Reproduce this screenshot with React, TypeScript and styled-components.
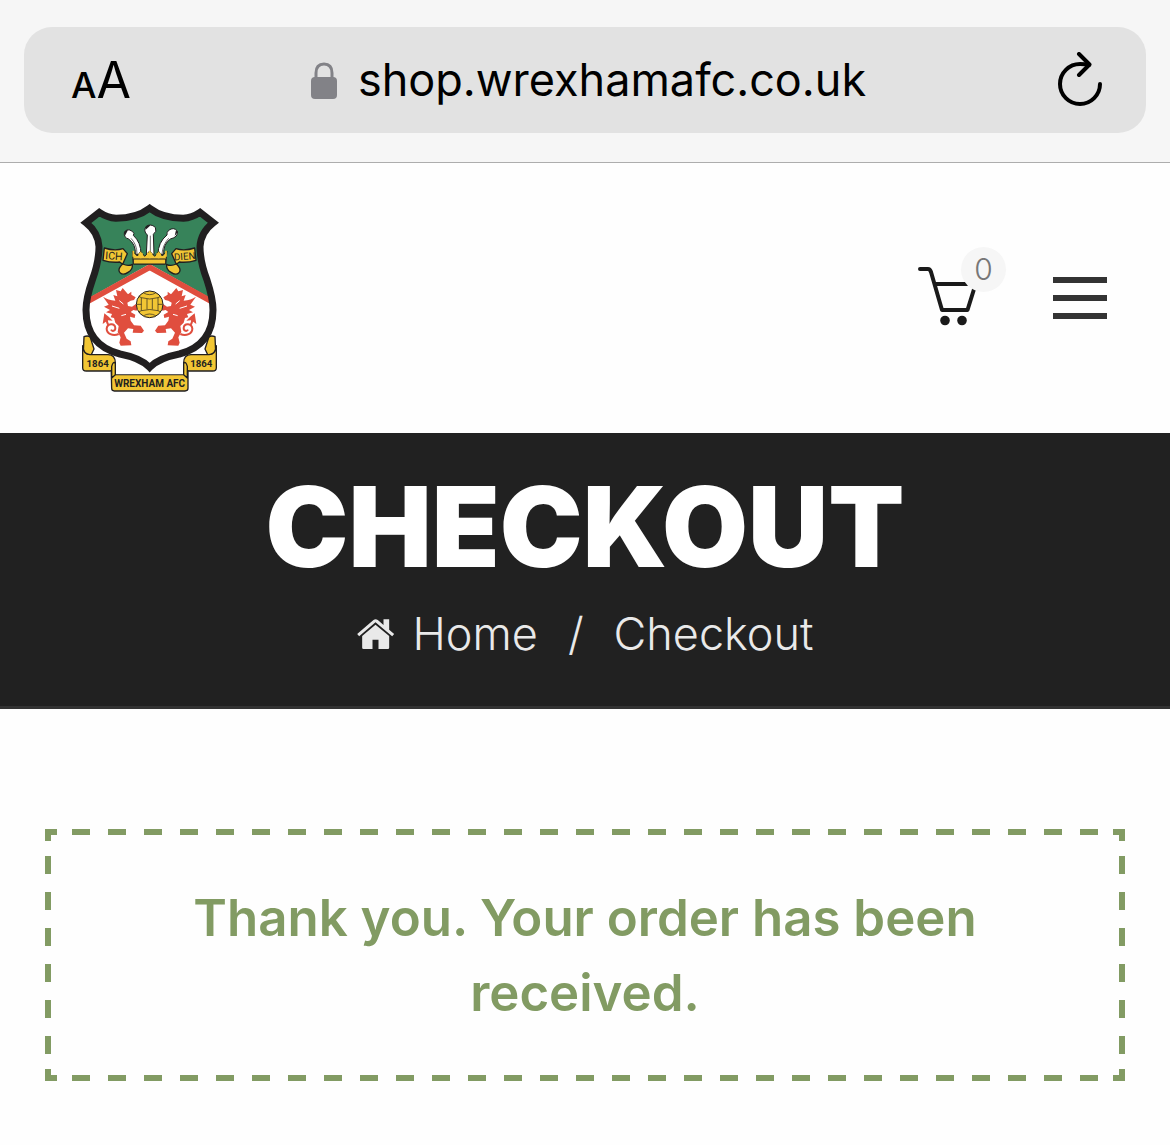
import React from "react";
import styled, { createGlobalStyle } from "styled-components";

const colors = {
  ink: "#212121",
  line: "#333333",
  green: "#829b63",
};

const GlobalStyle = createGlobalStyle`
  *, *::before, *::after { box-sizing: border-box; }
  body {
    margin: 0;
    background: #fefefe;
    font-family: Inter, "Liberation Sans", sans-serif;
  }
`;

const BrowserBar = styled.div`
  padding: 27px 24px 29px;
  background: #f6f6f6;
  border-bottom: 1px solid #adadad;
`;

const AddressField = styled.div`
  display: grid;
  grid-template-columns: 1fr auto 1fr;
  align-items: center;
  min-height: 106px;
  padding: 0 44px 0 47px;
  border-radius: 28px;
  background: #e2e2e2;
`;

const PlainButton = styled.button`
  display: flex;
  align-items: center;
  padding: 0;
  border: 0;
  background: none;
  color: #000;
  font: inherit;
  cursor: pointer;
`;

const TextSizeButton = styled(PlainButton)`
  justify-self: start;
  align-items: baseline;
  padding-top: 5px;
  font-size: 50px;
  line-height: 60px;
`;

const SmallLetter = styled.span`
  font-size: 36px;
  font-weight: 500;
`;

const UrlButton = styled(PlainButton)`
  gap: 21px;
  padding-left: 4px;
  font-size: 45px;
  line-height: 60px;
`;

const ReloadButton = styled(PlainButton)`
  justify-self: end;
`;

const SiteHeader = styled.header`
  display: flex;
  align-items: center;
  justify-content: space-between;
  padding: 41px 63px 40px 80px;
`;

const LogoLink = styled.a`
  display: block;
  height: 189px;
`;

const HeaderActions = styled.nav`
  display: flex;
  align-items: center;
  gap: 74px;
  padding-bottom: 2px;
`;

const CartLink = styled.a`
  position: relative;
  display: block;
  height: 64px;
  color: #1a1a1a;
`;

const CartCount = styled.span`
  position: absolute;
  top: -19px;
  right: -27px;
  width: 45px;
  border-radius: 50%;
  background: #f6f6f6;
  color: #777;
  font-size: 30px;
  font-weight: 300;
  line-height: 45px;
  text-align: center;
`;

const MenuButton = styled(PlainButton)`
  flex-direction: column;
  gap: 12px;
`;

const MenuBar = styled.span`
  width: 54px;
  height: 6px;
  background: ${colors.line};
`;

const TitleBand = styled.section`
  display: flex;
  flex-direction: column;
  align-items: center;
  gap: 23px;
  padding: 40px 24px 42px;
  border-bottom: 3px solid ${colors.line};
  background: ${colors.ink};
`;

const PageTitle = styled.h1`
  margin: 0;
  color: #fff;
  font-size: 111px;
  font-weight: 900;
  line-height: 108px;
  text-transform: uppercase;
`;

const Breadcrumb = styled.nav`
  display: flex;
  align-items: center;
  gap: 30px;
  color: #e9e9e9;
  font-size: 45px;
  font-weight: 300;
  line-height: 60px;
`;

const HomeLink = styled.a`
  display: flex;
  align-items: center;
  gap: 18px;
  color: inherit;
  text-decoration: none;
`;

const Main = styled.main`
  padding: 120px 45px 64px;
`;

const dash = (angle: string) =>
  `linear-gradient(${angle}, ${colors.green} 25%, transparent 25% 75%, ${colors.green} 75%)`;
const solid = `linear-gradient(${colors.green}, ${colors.green})`;

/* Dashes of 18px with 18px gaps, closed by a solid 12px angle in each corner. */
const Notice = styled.p`
  margin: 0;
  padding: 51px 120px;
  background:
    ${dash("90deg")} top left / 36px 6px round no-repeat,
    ${dash("90deg")} bottom left / 36px 6px round no-repeat,
    ${dash("180deg")} top left / 6px 36px no-repeat round,
    ${dash("180deg")} top right / 6px 36px no-repeat round,
    ${solid} top left / 12px 6px no-repeat,
    ${solid} top right / 12px 6px no-repeat,
    ${solid} bottom left / 12px 6px no-repeat,
    ${solid} bottom right / 12px 6px no-repeat,
    ${solid} top left / 6px 12px no-repeat,
    ${solid} top right / 6px 12px no-repeat,
    ${solid} bottom left / 6px 12px no-repeat,
    ${solid} bottom right / 6px 12px no-repeat;
  color: ${colors.green};
  font-size: 51px;
  font-weight: 600;
  line-height: 75px;
  text-align: center;
`;

const LockIcon = () => (
  <svg width="26" height="37" viewBox="0 0 26 37" aria-hidden="true">
    <path d="M5 18V11C5 5 8 2 13 2s8 3 8 9v7" fill="none" stroke="#828287" strokeWidth="3" />
    <rect y="15" width="26" height="22" rx="4" fill="#828287" />
  </svg>
);

const ReloadIcon = () => (
  <svg
    width="44"
    height="56"
    viewBox="0 0 44 56"
    fill="none"
    stroke="#000"
    strokeWidth="4"
    strokeLinecap="round"
    strokeLinejoin="round"
    aria-hidden="true"
  >
    <path d="M42 32A20 20 0 1 1 22 12Q27 12 31 13" />
    <path d="M21 2L31.500 12.500L21 23" />
  </svg>
);

const CartIcon = () => (
  <svg width="61" height="64" viewBox="0 0 61 64" aria-hidden="true">
    <g fill="none" stroke="currentColor" strokeWidth="4" strokeLinecap="round" strokeLinejoin="round">
      <path d="M2 3H10Q12 3 13 6L24 44H49.500L57 20" />
      <path d="M18 18H52" />
    </g>
    <circle cx="27" cy="54.500" r="4.800" fill="currentColor" />
    <circle cx="44" cy="54.500" r="4.800" fill="currentColor" />
  </svg>
);

const HomeIcon = () => (
  <svg width="38" height="32" viewBox="45 86 113 96" fill="currentColor" aria-hidden="true">
    <path d="M45 134L94 92Q100 87 107 92L124 107V90H141V121L156 134L150 141L100 99L51 141Z" />
    <path d="M60 140L100 106L141 140V175Q141 179 137 179H109V151H91V179H64Q60 179 60 175Z" />
  </svg>
);

const shield =
  "M239 40Q200 70 138 70Q112 68 88 52L48 83Q85 112 87 155Q87 200 67 255Q48 310 48 345C48 425 92 462 150 477Q212 489 239 517Q266 489 328 477C386 462 429 425 429 345Q429 310 411 255Q390 200 390 155Q392 112 430 83L390 52Q366 68 340 70Q278 70 239 40Z";

const Dragon = () => (
  <g transform="translate(24 15)">
    <path
      fill="#e04e3e"
      d="M114 270L128 274L134 264L141 272L150 283L160 275L160 284L173 292L168 300L158 302L148 308L150 318L162 320L174 312L180 320L176 332L166 330L158 336L172 344L170 354L156 350L158 362L168 376L188 377L198 392L192 399L164 398L166 387L150 385L138 398L146 416L158 424L160 436L128 437L124 428L128 412L119 396L122 378L112 368L108 354L98 352L102 342L84 337L96 330L78 320L92 314L75 290Q90 300 112 302L106 285L118 289Z"
    />
    <path
      d="M122 402C104 410 86 400 86 386C88 370 110 368 112 384C112 394 102 395 99 389M92 376Q84 366 88 352"
      fill="none"
      stroke="#e04e3e"
      strokeWidth="6"
    />
    <path d="M79 340L92 350L104 362L90 361L74 372Z" fill="#e04e3e" />
    <path d="M102 318L124 325M124 302L136 312M130 347L144 343" fill="none" stroke="#fff" strokeWidth="3" />
  </g>
);

const ribbon = { fill: "#f2c634", stroke: "#211f20", strokeWidth: 4 };

const Crest = () => (
  <svg width="139" height="189" viewBox="30 27 417 567" role="img" aria-label="Wrexham AFC">
    <defs>
      <clipPath id="shield-shape">
        <path d={shield} />
      </clipPath>
    </defs>
    <g {...ribbon} strokeLinejoin="round">
      <path d="M42 425Q52 421 60 425L72 462L62 483L40 472Z" />
      <path d="M435 425Q425 421 417 425L405 462L415 483L437 472Z" />
      <path d="M123 496L138 505V539H338V505L354 496V580Q354 588 345 588H133Q125 588 125 580Z" />
      <path d="M38 452Q40 478 60 479H114Q136 479 136 504Q136 528 120 528H49Q38 528 38 518Z" />
      <path d="M439 452Q437 478 417 479H363Q341 479 341 504Q341 528 357 528H428Q439 528 439 518Z" />
      <path d="M125 549V514Q130 497 136 505V539Z" />
      <path d="M352 549V514Q347 497 341 505V539Z" />
      <path d="M138 480H339V538H138Z" fill="#fefefe" stroke="none" />
    </g>
    <g clipPath="url(#shield-shape)">
      <rect x="30" y="27" width="417" height="567" fill="#fff" />
      <path d="M30 27H447V324L239 207L30 324Z" fill="#37835a" />
      <path d="M30 332L239 217L447 332" fill="none" stroke="#e04e3e" strokeWidth="17" />
    </g>
    <Dragon />
    <g transform="matrix(-1 0 0 1 477 0)">
      <Dragon />
    </g>
    <path d={shield} fill="none" stroke="#211f20" strokeWidth="21" />

    <g fill="#fff" stroke="#211f20" strokeWidth="3" strokeLinejoin="round">
      <path d="M196 178Q198 148 176 132Q161 128 163 113Q170 98 187 109Q195 115 190 121Q213 142 213 178Z" />
      <path d="M281 178Q279 148 301 132Q326 126 322 108Q311 95 296 106Q289 113 291 120Q264 142 264 178Z" />
      <path d="M229 178L232 120Q219 108 228 95Q241 84 256 97Q262 110 250 118L252 178Z" />
      <path d="M201 177Q201 149 183 130M241 176V122M276 177Q278 150 296 130" fill="none" strokeWidth="2" />
    </g>
    <path d="M162 114Q163 105 174 105L165 122ZM226 96Q233 87 242 91L227 104ZM318 105L323 112L314 123Z" fill="#211f20" />

    <g fill="#f2c634" stroke="#211f20" strokeWidth="3">
      <path d="M190 207L187 168L202 183L212 169L224 184L239 168L254 184L266 169L277 183L291 168L287 207Z" />
      <path d="M190 192H287V207H190Z" />
    </g>
    <path
      d="M212 170V190M205 177H219M239 167V190M231 176H247M266 170V190M259 177H273M190 167V185M288 167V185"
      stroke="#f2c634"
      strokeWidth="5"
    />
    <g {...ribbon} strokeLinejoin="round">
      <path d="M103 159Q134 169 159 161L172 176L158 208L149 201Q125 204 99 196Z" />
      <path d="M374 159Q343 169 318 161L305 176L319 208L328 201Q352 204 378 196Z" />
      <path d="M158 207Q175 215 187 208Q189 224 174 232Q160 242 151 234Q144 228 149 218Q153 211 158 207Z" />
      <path d="M319 207Q302 215 290 208Q288 224 303 232Q317 242 326 234Q333 228 328 218Q324 211 319 207Z" />
    </g>
    <g fill="#211f20" fontFamily="Roboto, Liberation Sans, sans-serif" textAnchor="middle">
      <text x="132" y="194" fontSize="32" transform="rotate(4 131 183)">ICH</text>
      <text x="344" y="194" fontSize="29" transform="rotate(-4 346 183)">DIEN</text>
      <g fontWeight="700">
        <text x="83" y="515" fontSize="29">1864</text>
        <text x="394" y="515" fontSize="29">1864</text>
        <text x="239" y="576" fontSize="30">WREXHAM AFC</text>
      </g>
    </g>

    <circle cx="239" cy="328" r="40" fill="#f2c634" stroke="#211f20" strokeWidth="3" />
    <path
      d="M221 294Q239 304 257 294M221 362Q239 352 257 362M214 308Q239 316 264 308V347Q239 340 214 347ZM231 312V343M247 312V343M200 328H214M264 328H278M214 308L206 304M264 308L272 304M214 347L206 351M264 347L272 351"
      fill="none"
      stroke="#211f20"
      strokeWidth="2"
    />
  </svg>
);

export default function App() {
  return (
    <>
      <GlobalStyle />
      <BrowserBar>
        <AddressField>
          <TextSizeButton type="button" aria-label="Text size">
            <SmallLetter>A</SmallLetter>
            <span>A</span>
          </TextSizeButton>
          <UrlButton type="button">
            <LockIcon />
            shop.wrexhamafc.co.uk
          </UrlButton>
          <ReloadButton type="button" aria-label="Reload">
            <ReloadIcon />
          </ReloadButton>
        </AddressField>
      </BrowserBar>

      <SiteHeader>
        <LogoLink href="#home" aria-label="Wrexham AFC home">
          <Crest />
        </LogoLink>
        <HeaderActions>
          <CartLink href="#cart" aria-label="Cart">
            <CartIcon />
            <CartCount>0</CartCount>
          </CartLink>
          <MenuButton type="button" aria-label="Menu">
            <MenuBar />
            <MenuBar />
            <MenuBar />
          </MenuButton>
        </HeaderActions>
      </SiteHeader>

      <TitleBand>
        <PageTitle>Checkout</PageTitle>
        <Breadcrumb aria-label="Breadcrumb">
          <HomeLink href="#home">
            <HomeIcon />
            Home
          </HomeLink>
          <span>/</span>
          <span>Checkout</span>
        </Breadcrumb>
      </TitleBand>

      <Main>
        <Notice role="status">Thank you. Your order has been received.</Notice>
      </Main>
    </>
  );
}
